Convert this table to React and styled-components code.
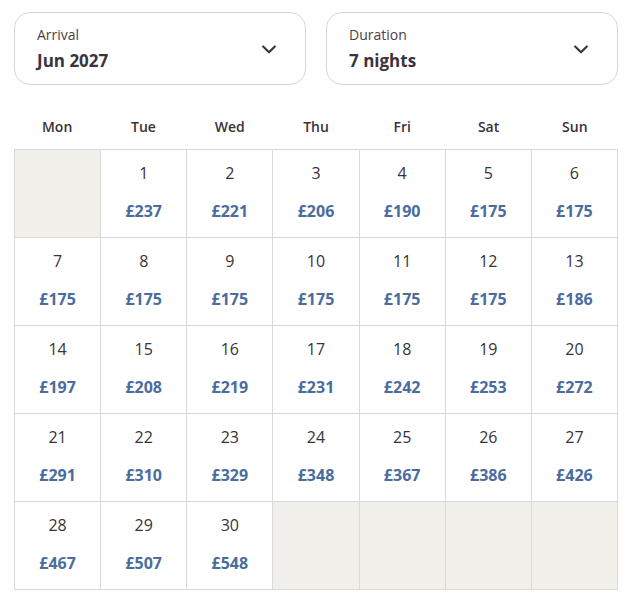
import React from "react";
import styled, { createGlobalStyle } from "styled-components";

const GlobalStyle = createGlobalStyle`
  body {
    margin: 0;
    background: #ffffff;
    font-family: "Open Sans", "Noto Sans", sans-serif;
    color: #3a3238;
  }
`;

const Page = styled.div`
  width: 604px;
  padding: 12px 14px;
`;

const Selects = styled.div`
  display: grid;
  grid-template-columns: 1fr 1fr;
  gap: 20px;
`;

const Select = styled.div`
  height: 73px;
  box-sizing: border-box;
  border: 1px solid #d6d6d6;
  border-radius: 16px;
  padding: 0 26px 0 22px;
  display: flex;
  align-items: center;
  justify-content: space-between;
`;

const SelectText = styled.div`
  display: flex;
  flex-direction: column;
  gap: 4px;
`;

const Label = styled.span`
  font-size: 14px;
  line-height: 20px;
  color: #4a4048;
`;

const Value = styled.span`
  font-size: 17px;
  font-weight: 700;
  line-height: 24px;
  color: #3b3340;
`;

const Chevron = () => (
  <svg width="20" height="20" viewBox="0 0 24 24" fill="none" stroke="#3b3340" strokeWidth="2.6" strokeLinecap="round" strokeLinejoin="round">
    <path d="M5 9l7 7 7-7" />
  </svg>
);

const Header = styled.div`
  display: grid;
  grid-template-columns: repeat(7, 1fr);
  margin-top: 19px;
  height: 45px;
  align-items: center;
`;

const DayName = styled.div`
  text-align: center;
  font-size: 14px;
  font-weight: 600;
  color: #3a3238;
`;

const Grid = styled.div`
  display: grid;
  grid-template-columns: repeat(7, 1fr);
  grid-auto-rows: 88px;
  border-top: 1px solid #d9d9d9;
  border-left: 1px solid #d9d9d9;
`;

const Cell = styled.div`
  border-right: 1px solid #d9d9d9;
  border-bottom: 1px solid #d9d9d9;
  background: ${(p) => (p.$empty ? "#f1f0ea" : "#ffffff")};
  display: flex;
  flex-direction: column;
  align-items: center;
  padding-top: 11px;
  box-sizing: border-box;
`;

const DayNum = styled.span`
  font-size: 16px;
  line-height: 24px;
  color: #3a3238;
`;

const Price = styled.span`
  margin-top: 14px;
  font-size: 16px;
  line-height: 24px;
  font-weight: 700;
  color: #4a6c9e;
`;

const prices = [
  237, 221, 206, 190, 175, 175, 175, 175, 175, 175, 175, 175, 186, 197, 208,
  219, 231, 242, 253, 272, 291, 310, 329, 348, 367, 386, 426, 467, 507, 548,
];

const days = ["Mon", "Tue", "Wed", "Thu", "Fri", "Sat", "Sun"];

const cells = [
  null,
  ...prices.map((p, i) => ({ day: i + 1, price: p })),
  null,
  null,
  null,
  null,
];

export default function App() {
  return (
    <Page>
      <GlobalStyle />
      <Selects>
        <Select>
          <SelectText>
            <Label>Arrival</Label>
            <Value>Jun 2027</Value>
          </SelectText>
          <Chevron />
        </Select>
        <Select>
          <SelectText>
            <Label>Duration</Label>
            <Value>7 nights</Value>
          </SelectText>
          <Chevron />
        </Select>
      </Selects>
      <Header>
        {days.map((d) => (
          <DayName key={d}>{d}</DayName>
        ))}
      </Header>
      <Grid>
        {cells.map((c, i) =>
          c ? (
            <Cell key={i}>
              <DayNum>{c.day}</DayNum>
              <Price>£{c.price}</Price>
            </Cell>
          ) : (
            <Cell key={i} $empty />
          )
        )}
      </Grid>
    </Page>
  );
}
